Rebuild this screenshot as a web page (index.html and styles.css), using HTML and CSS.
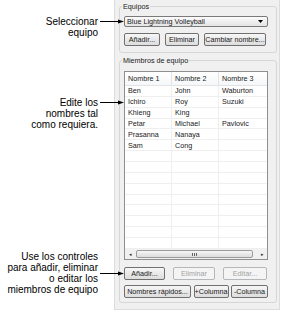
FILE: index.html
```html
<!DOCTYPE html>
<html lang="es">
<head>
  <meta charset="UTF-8">
  <meta name="viewport" content="width=device-width, initial-scale=1.0">
  <title>Miembros de equipo</title>
  <link rel="stylesheet" href="styles.css">
</head>
<body>
  <div class="figure">
    <div class="callout callout-team">
      <div class="callout-text">Seleccionar<br>equipo</div>
      <svg class="callout-arrow" viewBox="0 0 25 11"><line x1="1" y1="5.5" x2="21" y2="5.5"/><polygon points="19,3.5 25,5.5 19,7.5"/></svg>
    </div>
    <div class="callout callout-edit">
      <div class="callout-text">Edite los<br>nombres tal<br>como requiera.</div>
      <svg class="callout-arrow" viewBox="0 0 25 11"><line x1="1" y1="5.5" x2="21" y2="5.5"/><polygon points="19,3.5 25,5.5 19,7.5"/></svg>
    </div>
    <div class="callout callout-controls">
      <div class="callout-text">Use los controles<br>para añadir, eliminar<br>o editar los<br>miembros de equipo</div>
      <svg class="callout-arrow" viewBox="0 0 25 11"><line x1="1" y1="5.5" x2="21" y2="5.5"/><polygon points="19,3.5 25,5.5 19,7.5"/></svg>
    </div>

    <div class="panel">
      <fieldset class="group group-teams">
        <legend>Equipos</legend>
        <div class="select">
          <span>Blue Lightning Volleyball</span>
          <svg class="select-arrow" viewBox="0 0 5 3"><polygon points="0,0 5,0 2.5,3"/></svg>
        </div>
        <div class="btn-row btn-row-teams">
          <button>Añadir...</button>
          <button>Eliminar</button>
          <button>Cambiar nombre...</button>
        </div>
      </fieldset>

      <fieldset class="group group-members">
        <legend>Miembros de equipo</legend>
        <div class="list">
          <div class="list-head">
            <div>Nombre 1</div>
            <div>Nombre 2</div>
            <div>Nombre 3</div>
          </div>
          <div class="list-body" id="list-body"></div>
          <div class="scrollbar">
            <span class="scroll-btn">&#9666;</span>
            <span class="scroll-thumb">
              <svg viewBox="0 0 5 3"><line x1="0.5" y1="0" x2="0.5" y2="3"/><line x1="2.5" y1="0" x2="2.5" y2="3"/><line x1="4.5" y1="0" x2="4.5" y2="3"/></svg>
            </span>
            <span class="scroll-btn">&#9656;</span>
          </div>
        </div>
        <div class="btn-row btn-row-members">
          <button>Añadir...</button>
          <button disabled>Eliminar</button>
          <button disabled>Editar...</button>
        </div>
        <div class="btn-row btn-row-columns">
          <button>Nombres rápidos...</button>
          <button>+Columna</button>
          <button>-Columna</button>
        </div>
      </fieldset>
    </div>
  </div>

  <script>
    const members = [
      ['Ben', 'John', 'Waburton'],
      ['Ichiro', 'Roy', 'Suzuki'],
      ['Khieng', 'King', ''],
      ['Petar', 'Michael', 'Pavlovic'],
      ['Prasanna', 'Nanaya', ''],
      ['Sam', 'Cong', '']
    ];
    const ROW_COUNT = 15;

    const body = document.getElementById('list-body');
    for (let i = 0; i < ROW_COUNT; i++) {
      const row = document.createElement('div');
      row.className = 'list-row';
      const cells = members[i] || ['', '', ''];
      cells.forEach(text => {
        const cell = document.createElement('div');
        cell.textContent = text;
        row.appendChild(cell);
      });
      body.appendChild(row);
    }
  </script>
</body>
</html>
```

FILE: styles.css
```css
body {
  margin: 0;
  background: #fff;
  font-family: "Liberation Sans", Arial, sans-serif;
  color: #000;
}
.figure {
  position: relative;
  width: 284px;
  height: 323px;
}

/* callouts on the left */
.callout {
  position: absolute;
  left: 0;
  width: 124px;
  display: flex;
  align-items: flex-start;
  font-size: 10px;
  line-height: 11px;
}
.callout-text {
  flex: 1;
  text-align: right;
}
.callout-arrow {
  flex: none;
  width: 25px;
  height: 11px;
  margin-left: 1px;
}
.callout-arrow line {
  stroke: #000;
  stroke-width: 1;
}
.callout-arrow polygon {
  fill: #000;
}
.callout-team {
  top: 16px;
}
.callout-edit {
  top: 97px;
}
.callout-controls {
  top: 251px;
}
.callout-controls .callout-arrow {
  margin-top: 17px;
}

/* dialog panel */
.panel {
  margin-left: 114px;
  width: 166px;
  box-sizing: border-box;
  background: #f0f0f0;
  border: 1px solid #dcdcdc;
  border-top: none;
  padding: 2px 2px 6px 4px;
  font-size: 7.2px;
  color: #1a1a1a;
}
.group {
  margin: 0;
  padding: 5px 8px 6px 4px;
  border: 1px solid #d6d6d6;
  border-radius: 3px;
  min-width: 0;
}
.group legend {
  margin-left: -2px;
  padding: 0 1px;
  line-height: 9px;
}
.group-members {
  margin-top: 3px;
  padding-top: 6px;
  padding-bottom: 4px;
}

.select {
  height: 11px;
  box-sizing: border-box;
  border: 1px solid #7a7a7a;
  border-radius: 2px;
  background: linear-gradient(#fbfbfb, #e4e4e4);
  display: flex;
  align-items: center;
  padding: 0 4px 0 2px;
}
.select span {
  flex: 1;
}
.select-arrow {
  width: 5px;
  height: 3px;
  fill: #000;
}

.btn-row {
  display: grid;
  margin-top: 6px;
}
.btn-row-teams {
  grid-template-columns: 36px 34px 62px;
  gap: 5px;
}
.btn-row-members {
  grid-template-columns: 41px 42px 44px;
  gap: 8px;
  margin-top: 7px;
}
.btn-row-columns {
  grid-template-columns: 67px 35px 1fr;
  gap: 2.5px;
  margin-top: 5px;
}
button {
  height: 13px;
  padding: 0;
  border: 1px solid #707070;
  border-radius: 2px;
  background: linear-gradient(#f7f7f7, #e9e9e9 50%, #dddddd);
  font-family: inherit;
  font-size: 7.2px;
  color: #1a1a1a;
  white-space: nowrap;
}
button:disabled {
  border-color: #b4b8bb;
  background: #f4f4f4;
  color: #a3a3a3;
}

/* member list */
.list {
  height: 189px;
  box-sizing: border-box;
  border: 1px solid #8e8f8f;
  background: #fff;
  display: flex;
  flex-direction: column;
}
.list-head, .list-row {
  display: grid;
  grid-template-columns: 47px 47px 1fr;
}
.list-head {
  height: 14px;
  box-sizing: border-box;
  border-bottom: 1px solid #e2e3e4;
  background: linear-gradient(#fff, #f6f7f8);
}
.list-head div, .list-row div {
  padding-left: 3px;
  display: flex;
  align-items: center;
}
.list-head div {
  border-right: 1px solid #e3e4e6;
}
.list-body {
  flex: 1;
  overflow: hidden;
}
.list-row {
  height: 10.87px;
  box-sizing: border-box;
  border-bottom: 1px solid #efefef;
}
.list-row div {
  border-right: 1px solid #efefef;
}
.list-head div:last-child, .list-row div:last-child {
  border-right: none;
}

.scrollbar {
  height: 10px;
  flex: none;
  display: flex;
  align-items: stretch;
  background: #f0f0f0;
}
.scroll-btn {
  width: 10px;
  font-size: 5px;
  color: #333;
  display: flex;
  align-items: center;
  justify-content: center;
}
.scroll-thumb {
  flex: 1;
  margin: 1px 4px 1px 1px;
  border: 1px solid #9b9b9b;
  border-radius: 2px;
  background: linear-gradient(#f6f6f6, #dcdcdc);
  display: flex;
  align-items: center;
  justify-content: center;
}
.scroll-thumb svg {
  width: 5px;
  height: 3px;
  stroke: #666;
  stroke-width: 1;
}
```
